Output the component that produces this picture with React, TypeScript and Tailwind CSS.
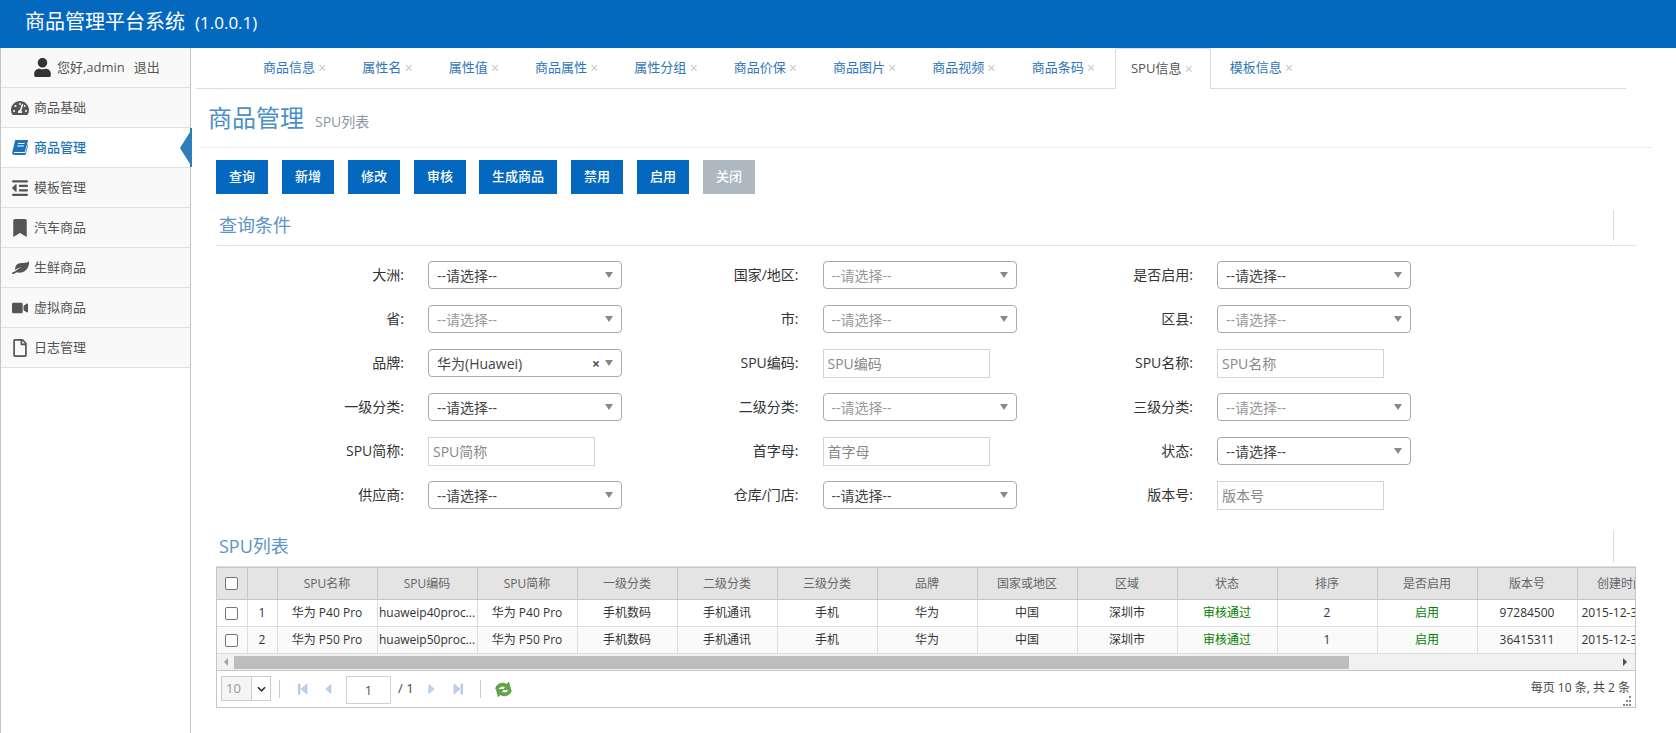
import { FaUser, FaTachometerAlt, FaOutdent, FaBookmark, FaVideo, FaRegFile } from 'react-icons/fa';
import type { ReactNode } from 'react';

const tabs = ['商品信息', '属性名', '属性值', '商品属性', '属性分组', '商品价保', '商品图片', '商品视频', '商品条码', 'SPU信息', '模板信息'];

function BookIcon() {
  return (
    <svg viewBox="0 0 16 15" className="w-[16px] h-[15px]">
      <path
        fill="currentColor"
        d="M3.500 0H15.500c.4 0 .6.3.5.7L13 11.500c-.1.4-.4.6-.8.6H2.500c-.7 0-1 .9-.2 1h11l2.700-9.800.5.700-2.800 10.300c-.1.400-.4.600-.8.600H2.500C1 15 0 13.800.2 12.400L3 .8C3.100.3 3.200 0 3.500 0z"
      />
      <path d="M6 3.500h6.500M5.300 6h6.500" stroke="#fff" strokeWidth="1" fill="none" />
    </svg>
  );
}

function LeafIcon() {
  return (
    <svg viewBox="0 0 18 13" className="w-[18px] h-[13px]" fill="currentColor">
      <path d="M18 .5c.3 3-.6 6.500-3.500 9-2.500 2.200-6 2.700-8.500 1.800-1 .6-2 1-3 1.500-.8.4-1.800.3-2-.3-.2-.7.3-1 .9-1.200 1.600-.6 3-1.300 4.300-2.600 1.400-1.200 3-2 5-2.200-2.600-.2-5 .8-7 2.700C3.700 6 5.200 3 8.500 2.300 12 1.600 15.500 2.300 18 .5z" />
    </svg>
  );
}

const menu: { title: string; icon: ReactNode; active?: boolean }[] = [
  { title: '商品基础', icon: <FaTachometerAlt size={18} /> },
  { title: '商品管理', icon: <BookIcon />, active: true },
  { title: '模板管理', icon: <FaOutdent size={18} /> },
  { title: '汽车商品', icon: <FaBookmark size={18} /> },
  { title: '生鲜商品', icon: <LeafIcon /> },
  { title: '虚拟商品', icon: <FaVideo size={16} /> },
  { title: '日志管理', icon: <FaRegFile size={18} /> },
];

type Field = { label: string; kind: 'select' | 'input'; value?: string; off?: boolean; clear?: boolean };

const fields: Field[] = [
  { label: '大洲', kind: 'select', value: '--请选择--' },
  { label: '国家/地区', kind: 'select', value: '--请选择--', off: true },
  { label: '是否启用', kind: 'select', value: '--请选择--' },
  { label: '省', kind: 'select', value: '--请选择--', off: true },
  { label: '市', kind: 'select', value: '--请选择--', off: true },
  { label: '区县', kind: 'select', value: '--请选择--', off: true },
  { label: '品牌', kind: 'select', value: '华为(Huawei)', clear: true },
  { label: 'SPU编码', kind: 'input' },
  { label: 'SPU名称', kind: 'input' },
  { label: '一级分类', kind: 'select', value: '--请选择--' },
  { label: '二级分类', kind: 'select', value: '--请选择--', off: true },
  { label: '三级分类', kind: 'select', value: '--请选择--', off: true },
  { label: 'SPU简称', kind: 'input' },
  { label: '首字母', kind: 'input' },
  { label: '状态', kind: 'select', value: '--请选择--' },
  { label: '供应商', kind: 'select', value: '--请选择--' },
  { label: '仓库/门店', kind: 'select', value: '--请选择--' },
  { label: '版本号', kind: 'input' },
];

const columns = ['SPU名称', 'SPU编码', 'SPU简称', '一级分类', '二级分类', '三级分类', '品牌', '国家或地区', '区域', '状态', '排序', '是否启用', '版本号', '创建时间'];

const rows = [
  ['华为 P40 Pro', 'huaweip40proc...', '华为 P40 Pro', '手机数码', '手机通讯', '手机', '华为', '中国', '深圳市', '审核通过', '2', '启用', '97284500', '2015-12-31 12:00:00'],
  ['华为 P50 Pro', 'huaweip50proc...', '华为 P50 Pro', '手机数码', '手机通讯', '手机', '华为', '中国', '深圳市', '审核通过', '1', '启用', '36415311', '2015-12-31 12:00:00'],
];

function SectionTitle({ text }: { text: string }) {
  return (
    <div className="h-[35px] flex justify-between pl-[3px] pr-[22px]">
      <div className="text-[18px] leading-[30px] text-[#5c93c9]">{text}</div>
      <div className="w-px h-[31px] bg-[#dcdcdc]" />
    </div>
  );
}

function FormField({ f }: { f: Field }) {
  return (
    <div className="flex items-start gap-[24px]">
      <div className="w-[120px] text-right text-[14px] leading-[28px] text-[#333] whitespace-nowrap">{f.label}:</div>
      {f.kind === 'select' ? (
        <div className="w-[194px] h-[28px] flex items-center bg-white border border-[#aaa] rounded-[4px] pl-[8px] pr-[8px] text-[14px]">
          <span className={f.off ? 'flex-1 text-[#999]' : 'flex-1 text-[#444]'}>{f.value}</span>
          {f.clear && <span className="text-[14px] font-bold text-[#555] mr-[5px]">×</span>}
          <span className="w-0 h-0 border-x-[4px] border-x-transparent border-t-[6px] border-t-[#888]" />
        </div>
      ) : (
        <div className="w-[167px] h-[29px] flex items-center border border-[#d3d3d3] pl-[4px] text-[14px] text-[#888]">{f.label}</div>
      )}
    </div>
  );
}

function Checkbox() {
  return <span className="block w-[13px] h-[13px] border border-[#767676] rounded-[2px] bg-white" />;
}

function PagerIcon({ d, className }: { d: string; className: string }) {
  return (
    <svg viewBox="0 0 10 12" className={className}>
      <path d={d} fill="#bcd2ee" stroke="#9db8de" strokeWidth="0.6" />
    </svg>
  );
}

export default function App() {
  return (
    <div className="h-screen flex flex-col bg-white overflow-hidden [font-family:'Open_Sans','Noto_Sans_CJK_SC',sans-serif]">
      <header className="h-[48px] shrink-0 bg-[#0568bf] pl-[25px] text-white leading-[44px] flex items-baseline">
        <span className="text-[20px]">商品管理平台系统</span>
        <span className="text-[17px] ml-[10px]">(1.0.0.1)</span>
      </header>

      <div className="flex-1 flex min-h-0">
        {/* Sidebar */}
        <aside className="w-[191px] shrink-0 border-l border-r border-[#c4c4c4]">
          <div className="h-[40px] flex items-center pl-[32px] bg-[#f9f9f9] border-b border-[#e0e0e0] text-[13px] text-[#555]">
            <FaUser size={19} className="text-[#333]" />
            <span className="ml-[5px]">您好,admin</span>
            <span className="ml-[9px]">退出</span>
          </div>
          {menu.map((m) => (
            <div
              key={m.title}
              className={
                m.active
                  ? 'relative h-[40px] flex items-center bg-white border-b border-[#e0e0e0] text-[13px] font-medium text-[#1f74b8]'
                  : 'h-[40px] flex items-center bg-[#f9f9f9] border-b border-[#e0e0e0] text-[13px] text-[#555]'
              }
            >
              <span className="w-[33px] flex justify-center pl-[5px] shrink-0">{m.icon}</span>
              {m.title}
              {m.active && (
                <span className="absolute right-[-2px] top-0 h-[39px] w-[12px] flex items-center justify-end border-r-2 border-[#2e7cb8]">
                  <span className="w-0 h-0 border-y-[16px] border-y-transparent border-r-[10px] border-r-[#2e7cb8]" />
                </span>
              )}
            </div>
          ))}
        </aside>

        {/* Main */}
        <main className="flex-1 min-w-0">
          <div className="h-[41px] ml-[5px] mr-[50px] pl-[50px] flex border-b border-[#ddd]">
            {tabs.map((t) => (
              <div
                key={t}
                className={
                  t === 'SPU信息'
                    ? 'h-[41px] ml-[1px] pl-[15px] pr-[17px] mr-[2px] flex items-center gap-[3.3px] text-[13px] text-[#555] bg-white border border-b-0 border-[#ddd] rounded-t-[3px]'
                    : 'h-[40px] px-[17px] mr-[2px] flex items-center gap-[3.3px] text-[13px] text-[#2f76b8]'
                }
              >
                <span>{t}</span>
                <span className="text-[14px] leading-none text-[#c8c8c8]">×</span>
              </div>
            ))}
          </div>

          <div className="h-[59px] ml-[10px] mr-[25px] pl-[7px] flex items-center gap-[11px] border-b border-dotted border-[#ddd]">
            <span className="text-[24px] text-[#4a8fca]">商品管理</span>
            <span className="text-[14px] text-[#8a97a8] mt-[6px]">SPU列表</span>
          </div>

          <div className="pl-[25px] w-[1445px]">
            <div className="flex gap-[14px] mt-[12px] mb-[16px]">
              {['查询', '新增', '修改', '审核', '生成商品', '禁用', '启用', '关闭'].map((b) => (
                <button
                  key={b}
                  className={
                    b === '关闭'
                      ? 'h-[34px] px-[13px] text-[13px] font-medium text-white bg-[#adb8c0]'
                      : b === '生成商品'
                        ? 'h-[34px] px-[13px] -ml-px text-[13px] font-medium text-white bg-[#0568bf]'
                        : 'h-[34px] px-[13px] text-[13px] font-medium text-white bg-[#0568bf]'
                  }
                >
                  {b}
                </button>
              ))}
            </div>

            <div className="border-b border-[#dfe5ec]">
              <SectionTitle text="查询条件" />
            </div>

            <div className="grid grid-cols-[394.5px_394.5px_394.5px] auto-rows-[28px] gap-y-[16px] pl-[68px] pt-[15px] pb-[22px]">
              {fields.map((f) => (
                <FormField key={f.label} f={f} />
              ))}
            </div>

            <SectionTitle text="SPU列表" />

            {/* Grid */}
            <div className="border border-[#c6c6c6] border-t-[#dbe3ea] text-[12px]">
              <div className="overflow-hidden">
                <table className="table-fixed border-collapse w-[1448px] text-center">
                  <colgroup>
                    <col className="w-[30px]" />
                    <col className="w-[30px]" />
                    {columns.map((c, i) => (
                      <col key={c} className={i === columns.length - 1 ? 'w-[88px]' : 'w-[100px]'} />
                    ))}
                  </colgroup>
                  <thead>
                    <tr className="h-[32px] bg-[#e4e4e4] text-[#666]">
                      <th className="border border-l-0 border-[#c6c6c6] font-normal pl-[8px]"><Checkbox /></th>
                      <th className="border border-[#c6c6c6] font-normal" />
                      {columns.map((c) => (
                        <th key={c} className="border border-[#c6c6c6] font-normal">{c}</th>
                      ))}
                    </tr>
                  </thead>
                  <tbody>
                    {rows.map((r, i) => (
                      <tr key={i} className={i === 1 ? 'h-[27px] bg-[#fafafa] text-[#333]' : 'h-[27px] bg-white text-[#333]'}>
                        <td className="border border-l-0 border-[#ddd] pl-[8px]"><Checkbox /></td>
                        <td className="border border-[#ddd]">{i + 1}</td>
                        {r.map((v, j) => (
                          <td
                            key={j}
                            className={
                              j === 9 || j === 11
                                ? 'border border-[#ddd] text-[#008000]'
                                : j === 13
                                  ? 'border border-[#ddd] text-left pl-[4px] whitespace-nowrap overflow-hidden'
                                  : 'border border-[#ddd] whitespace-nowrap overflow-hidden'
                            }
                          >
                            {v}
                          </td>
                        ))}
                      </tr>
                    ))}
                  </tbody>
                </table>
              </div>

              {/* Scrollbar */}
              <div className="h-[17px] bg-[#f1f1f1] border-b border-[#c6c6c6] flex items-center">
                <span className="w-[17px] flex justify-center">
                  <span className="w-0 h-0 border-y-[4px] border-y-transparent border-r-[4px] border-r-[#a3a3a3]" />
                </span>
                <div className="w-[1115px] h-[13px] bg-[#bdbdbd]" />
                <span className="flex-1 flex justify-end pr-[8px]">
                  <span className="w-0 h-0 border-y-[4px] border-y-transparent border-l-[4px] border-l-[#505050]" />
                </span>
              </div>

              {/* Pager */}
              <div className="h-[36px] flex items-center pl-[4px] text-[#444]">
                <div className="w-[50px] h-[25px] flex border border-[#ccc] mt-[-1px]">
                  <span className="w-[29px] bg-[#f5f5f5] text-[13px] leading-[23px] pl-[4px] text-[#999]">10</span>
                  <span className="flex-1 border-l border-[#ccc] flex items-center justify-center">
                    <svg viewBox="0 0 10 6" className="w-[9px] h-[6px]">
                      <path d="M1 1l4 4 4-4" fill="none" stroke="#333" strokeWidth="1.8" />
                    </svg>
                  </span>
                </div>
                <span className="w-px h-[18px] bg-[#ccc] ml-[8px]" />
                <PagerIcon d="M1 1h1.500v10H1zM9.500 1v10L3.500 6z" className="w-[11px] h-[12px] ml-[17px]" />
                <PagerIcon d="M6.500 1v10L1 6z" className="w-[9px] h-[12px] ml-[17px]" />
                <div className="w-[45px] h-[28px] ml-[12px] mt-[1px] border border-[#d0d0d0] text-center text-[13px] leading-[27px] text-[#555]">1</div>
                <span className="ml-[7px] text-[13px]">/ 1</span>
                <PagerIcon d="M2 1v10L8 6z" className="w-[9px] h-[12px] ml-[13px]" />
                <PagerIcon d="M7.500 1h1.500v10H7.500zM.500 1v10L6.500 6z" className="w-[11px] h-[12px] ml-[17px]" />
                <span className="w-px h-[18px] bg-[#ccc] ml-[16px]" />
                <svg viewBox="1.500 1.500 13 13" className="w-[17px] h-[17px] ml-[14px]">
                  <path d="M2 7.500C2.500 3.500 7.500 2 10.500 4.200L12 2.500l1.500 5.500H8l1.500-1.800C7.800 5 5.200 5.300 4.200 7.500z" fill="#62a83f" stroke="#3f8a2c" strokeWidth="0.5" />
                  <path d="M14 8.500c-.5 4-5.500 5.500-8.500 3.300L4 13.500 2.500 8H8l-1.500 1.800c1.700 1.200 4.300.9 5.300-1.300z" fill="#62a83f" stroke="#3f8a2c" strokeWidth="0.5" />
                </svg>
                <div className="relative flex-1 h-full text-right pr-[5px] pt-[6px] text-[12px] leading-[22px] text-[#444]">
                  每页 10 条, 共 2 条
                  <svg viewBox="0 0 10 10" className="absolute right-[3px] bottom-[1px] w-[10px] h-[10px]">
                    <path d="M7 0h2v2H7zM4 4h2v2H4zM7 4h2v2H7zM1 8h2v2H1zM4 8h2v2H4zM7 8h2v2H7z" fill="#888" />
                  </svg>
                </div>
              </div>
            </div>
          </div>
        </main>
      </div>
    </div>
  );
}
